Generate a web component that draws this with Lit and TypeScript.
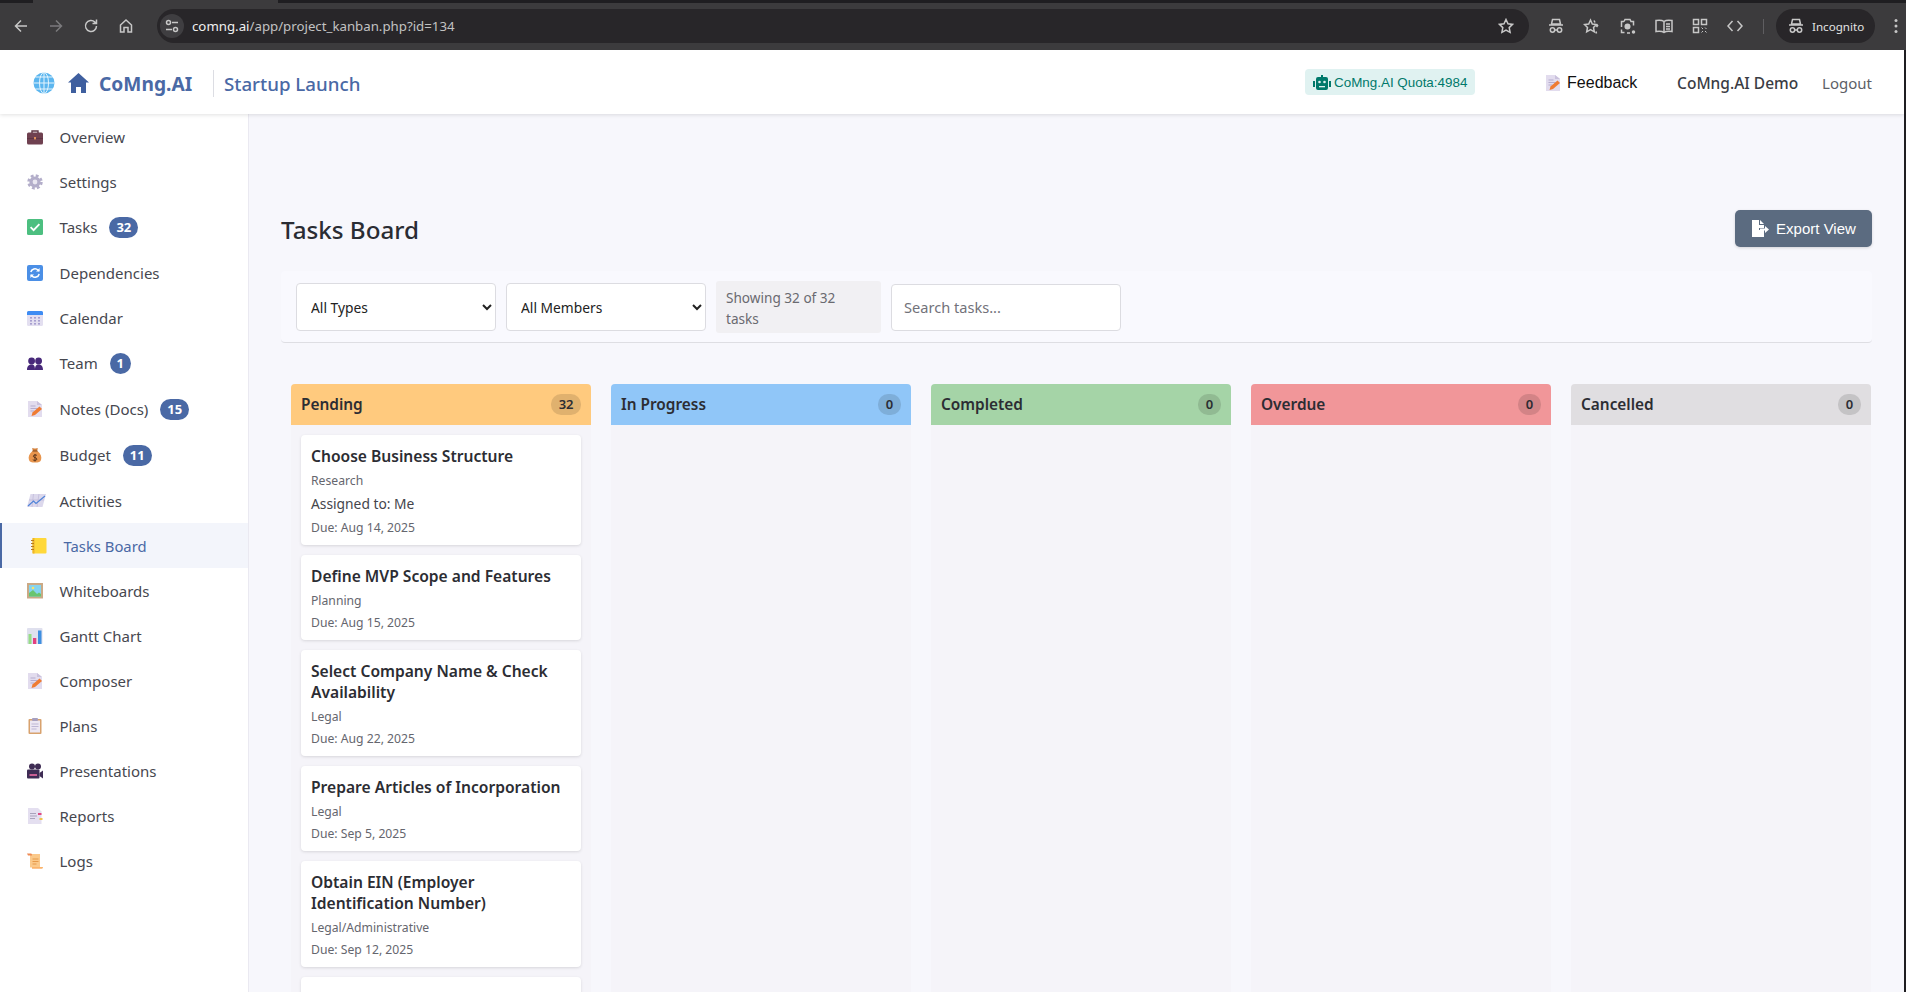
import { LitElement, html, css, svg } from 'lit';
import { customElement } from 'lit/decorators.js';

const icons: Record<string, unknown> = {
  briefcase: svg`<rect x="0" y="3.500" width="16" height="12" rx="1.500" fill="#6f4150"/><path d="M5 4V2h6v2" fill="none" stroke="#5d3644" stroke-width="1.400"/><rect x="0" y="9" width="16" height=".8" fill="#5a3341"/><rect x="7" y="8" width="2" height="2.400" fill="#e0905a"/>`,
  gear: svg`<circle cx="8" cy="8" r="6.400" fill="none" stroke="#b3aeca" stroke-width="2.600" stroke-dasharray="2.800 2.226"/><circle cx="8" cy="8" r="5.600" fill="#b3aeca"/><circle cx="8" cy="8" r="2.400" fill="#e9e7f1"/>`,
  check: svg`<rect x="0" y="0" width="16" height="16" rx="1.500" fill="#4cbf80"/><path d="M3.600 8.200l3 3 5.800-6" fill="none" stroke="#fff" stroke-width="1.800"/>`,
  refresh: svg`<rect x="0" y="0" width="16" height="16" rx="2" fill="#4b8fe6"/><path d="M3.800 7A4.300 4.300 0 0 1 11 5l1 1M12.200 9A4.300 4.300 0 0 1 5 11l-1-1" fill="none" stroke="#fff" stroke-width="1.500"/><path d="M12.600 3v3.600H9M3.400 13V9.400H7" fill="#fff"/>`,
  calendar: svg`<rect x="0" y="1" width="16" height="15" rx="1.500" fill="#e3dff0"/><path d="M0 5V2.500A1.500 1.500 0 0 1 1.500 1h13A1.500 1.500 0 0 1 16 2.500V5z" fill="#3e8cf3"/><g fill="#a79fd0"><rect x="3" y="7" width="2" height="1.600"/><rect x="7" y="7" width="2" height="1.600"/><rect x="11" y="7" width="2" height="1.600"/><rect x="3" y="10" width="2" height="1.600"/><rect x="7" y="10" width="2" height="1.600"/><rect x="11" y="10" width="2" height="1.600"/><rect x="3" y="13" width="2" height="1.600"/><rect x="7" y="13" width="2" height="1.600"/><rect x="11" y="13" width="2" height="1.600"/></g>`,
  team: svg`<g fill="#48297a"><circle cx="4.600" cy="6" r="3.400"/><circle cx="11.600" cy="6" r="3.400"/><path d="M0 15c0-4 2-5.500 4.600-5.500S8 11 8 15zM8 15c0-4 1-5.500 3.600-5.500S16 11 16 15z"/></g>`,
  memo: svg`<path d="M1 0h9l5 4v12H1z" fill="#e2dcee"/><path d="M10 0l5 4h-5z" fill="#c9c1dc"/><path d="M3.500 5h5M3.500 7.500h7M3.500 10h4" stroke="#b5acce" stroke-width="1"/><path d="M4.500 15l1-3.500 7-6 2.500 2.500-7 6z" fill="#ef7b33"/>`,
  money: svg`<path d="M5.500 4C2 7 1 10 2 13c.6 2 2.500 2.500 6 2.500s5.400-.5 6-2.500c1-3 0-6-3.500-9z" fill="#e8954d"/><path d="M5 1c1 .6 5 .6 6 0l-1 3H6z" fill="#d27f3a"/><rect x="5.500" y="3.500" width="5" height="1" fill="#7c4a22"/><path d="M10 8.500C9.500 7.800 6.300 7.500 6.300 9.200s3.600 1.100 3.600 2.900-3.400 1.400-4.100.6M8 7v7.500" fill="none" stroke="#53301a" stroke-width=".9"/>`,
  chart: svg`<path d="M3.500 1H19l-3.500 13H0z" fill="#dcd8ec"/><path d="M2 7h15M6.500 1L5 14M12 1l-2 13" stroke="#bdb7d8" stroke-width=".7"/><path d="M1 13l5.500-5 2.500 2.500L18 3" fill="none" stroke="#4f83d8" stroke-width="1.200"/>`,
  notebook: svg`<rect x="1.500" y="0" width="14" height="15.500" rx="1" fill="#ffd83a"/><path d="M1.500 0h2v15.500h-2z" fill="#eeb52b"/><path d="M0 2.500h3M0 5.500h3M0 8.500h3M0 11.500h3" stroke="#b57b24" stroke-width="1"/>`,
  picture: svg`<rect x="0" y="0" width="16" height="15.500" fill="#cba985"/><rect x="2" y="2" width="12" height="11.500" fill="#86d4ef"/><path d="M2 13.500V10l4-3 4 4 2-1.500 2 1.500v2.500z" fill="#69c56f"/><circle cx="6" cy="5" r="1.300" fill="#f8e36a"/>`,
  bars: svg`<rect x="0" y="0" width="15.500" height="16" rx="1" fill="#dfe0ee"/><rect x="1.500" y="6" width="3" height="10" fill="#96dc86"/><rect x="6" y="10" width="3.300" height="6" fill="#e4407f"/><rect x="11" y="2.500" width="3.500" height="13.500" fill="#3f8fe0"/>`,
  clipboard: svg`<rect x="1.500" y="1" width="13" height="15" rx="1" fill="#d8a26e"/><rect x="3" y="2.500" width="10" height="12" fill="#ece7f3"/><rect x="5" y="0" width="6" height="3" rx="1" fill="#a69fbf"/><path d="M4.500 6h7M4.500 8.500h7M4.500 11h5" stroke="#b9b1d2" stroke-width=".9"/>`,
  camera: svg`<g fill="#3e2c54"><circle cx="5" cy="3.500" r="3"/><circle cx="11" cy="3.500" r="3"/><rect x="0" y="6.500" width="12.500" height="9" rx="1"/><path d="M12.500 10l3.500-2.500v8L12.500 13z"/></g><rect x="2.500" y="11" width="7.500" height="2" fill="#c95f93"/>`,
  report: svg`<path d="M1 0h10l3.500 3.500V16H1z" fill="#e4dff0"/><path d="M3 5.500h6M3 8h7M3 10.500h5" stroke="#a9a3bc" stroke-width="1"/><rect x="11" y="5" width="3.500" height="2" fill="#e14a83"/><rect x="12.500" y="10" width="3" height="2" fill="#f1c24d"/>`,
  scroll: svg`<path d="M3 1h10v13.500H3z" fill="#fbc98a"/><path d="M0 .5h4c1 0 1 2 1 2H1z" fill="#ef8a53"/><path d="M5 14h11c0 1.500-1 1.800-1.500 1.800H5z" fill="#fbb46c"/><path d="M5.500 6h6M5.500 8.500h6M5.500 11h4" stroke="#e69a4b" stroke-width="1"/>`,
};

const nav = [
  { label: 'Overview', icon: 'briefcase' },
  { label: 'Settings', icon: 'gear' },
  { label: 'Tasks', icon: 'check', badge: 32 },
  { label: 'Dependencies', icon: 'refresh' },
  { label: 'Calendar', icon: 'calendar' },
  { label: 'Team', icon: 'team', badge: 1 },
  { label: 'Notes (Docs)', icon: 'memo', badge: 15 },
  { label: 'Budget', icon: 'money', badge: 11 },
  { label: 'Activities', icon: 'chart' },
  { label: 'Tasks Board', icon: 'notebook', active: true },
  { label: 'Whiteboards', icon: 'picture' },
  { label: 'Gantt Chart', icon: 'bars' },
  { label: 'Composer', icon: 'memo' },
  { label: 'Plans', icon: 'clipboard' },
  { label: 'Presentations', icon: 'camera' },
  { label: 'Reports', icon: 'report' },
  { label: 'Logs', icon: 'scroll' },
];

const columns = [
  { name: 'Pending', cls: 'pending', count: 32 },
  { name: 'In Progress', cls: 'progress', count: 0 },
  { name: 'Completed', cls: 'completed', count: 0 },
  { name: 'Overdue', cls: 'overdue', count: 0 },
  { name: 'Cancelled', cls: 'cancelled', count: 0 },
];

const tasks = [
  { title: 'Choose Business Structure', type: 'Research', who: 'Me', due: 'Aug 14, 2025' },
  { title: 'Define MVP Scope and Features', type: 'Planning', due: 'Aug 15, 2025' },
  { title: 'Select Company Name & Check Availability', type: 'Legal', due: 'Aug 22, 2025' },
  { title: 'Prepare Articles of Incorporation', type: 'Legal', due: 'Sep 5, 2025' },
  { title: 'Obtain EIN (Employer Identification Number)', type: 'Legal/Administrative', due: 'Sep 12, 2025' },
];

@customElement('browser-bar')
export class BrowserBar extends LitElement {
  static styles = css`
    :host {
      display: block;
      height: 50px;
      background: #3c3b3d;
      font-family: 'Noto Sans', sans-serif;
      color: #e3e3e3;
    }
    .strip {
      height: 3px;
      background: #1f1e21;
      display: flex;
    }
    .strip i {
      width: 245px;
      margin-left: 33px;
      background: #3c3b3d;
    }
    .row {
      display: flex;
      align-items: center;
      height: 34px;
      margin-top: 6px;
    }
    svg {
      display: block;
      fill: none;
      stroke: #c7c7c7;
      stroke-width: 1.5;
      flex: none;
    }
    svg.off {
      stroke: #7b7a7d;
    }
    .navs {
      display: flex;
      width: 157px;
      padding-left: 13px;
      box-sizing: border-box;
      gap: 19px;
    }
    .omni {
      width: 1372px;
      height: 34px;
      border-radius: 17px;
      background: #282629;
      display: flex;
      align-items: center;
      padding-left: 3px;
      box-sizing: border-box;
    }
    .tune {
      width: 24px;
      height: 24px;
      border-radius: 50%;
      background: #3f3e41;
      display: flex;
      align-items: center;
      justify-content: center;
      margin-right: 8px;
    }
    .url {
      font-size: 13.25px;
      color: #c2c2c2;
      flex: 1;
    }
    .url b {
      font-weight: 400;
      color: #f0f0f0;
    }
    .omni svg.star {
      margin-right: 15px;
    }
    .exts {
      display: flex;
      align-items: center;
      gap: 19px;
      margin-left: 19px;
    }
    .sep {
      width: 1px;
      height: 15px;
      background: #5f5e61;
      margin: 0 12px 0 20px;
    }
    .incog {
      width: 99px;
      height: 34px;
      border-radius: 17px;
      background: #282629;
      display: flex;
      align-items: center;
      font-size: 11.6px;
      padding-left: 12px;
      gap: 8px;
      box-sizing: border-box;
    }
    .kebab {
      margin-left: 19px;
    }
  `;

  render() {
    const hat = html`<svg width="16" height="16" viewBox="0 0 16 16"><path d="M4.500 1.500h7l1 4.500h-9zM1 7h14" /><circle cx="4.500" cy="12" r="2.200" /><circle cx="11.500" cy="12" r="2.200" /><path d="M6.700 12h2.600" /></svg>`;
    return html`
      <div class="strip"><i></i></div>
      <div class="row">
        <div class="navs">
          <svg width="16" height="16" viewBox="0 0 16 16"><path d="M14 8H3M8 2.500L2.500 8 8 13.500" /></svg>
          <svg class="off" width="16" height="16" viewBox="0 0 16 16"><path d="M2 8h11M8 2.500L13.500 8 8 13.500" /></svg>
          <svg width="16" height="16" viewBox="0 0 16 16"><path d="M13.500 8a5.500 5.500 0 1 1-1.600-3.900L13.500 5.500M13.500 1.500v4h-4" /></svg>
          <svg width="16" height="16" viewBox="0 0 16 16"><path d="M2.500 7L8 2l5.500 5v7H10V9.500H6V14H2.500z" /></svg>
        </div>
        <div class="omni">
          <span class="tune">
            <svg width="14" height="14" viewBox="0 0 14 14"><path d="M7 3.500h6M1 10.500h6" /><circle cx="3.500" cy="3.500" r="2" /><circle cx="10.500" cy="10.500" r="2" /></svg>
          </span>
          <span class="url"><b>comng.ai</b>/app/project_kanban.php?id=134</span>
          <svg class="star" width="16" height="16" viewBox="0 0 16 16"><path d="M8 1.500l2 4.300 4.600.6-3.400 3.200.9 4.700L8 12l-4.100 2.300.9-4.700L1.400 6.400 6 5.800z" /></svg>
        </div>
        <div class="exts">
          ${hat}
          <svg width="17" height="17" viewBox="0 0 17 17"><path d="M7.500 2l1.800 4 4.200.5-3 3 .8 4.300-3.800-2.200-3.800 2.200.8-4.300-3-3L5.700 6zM11 2.500l1 2M13 13.500l.5 2M15 7l-1.500 2" /></svg>
          <svg width="17" height="17" viewBox="0 0 17 17"><path d="M5 3.500l1-2h5l1 2h2.500v4M2.500 9V3.500H5M2.500 11.500v3h3M8 15h3" /><circle cx="8.500" cy="8.500" r="2.300" fill="#c7c7c7" /><circle cx="14.500" cy="14" r="1" fill="#c7c7c7" /></svg>
          <svg width="18" height="16" viewBox="0 0 18 16"><path d="M9 3.500C7 2 4 2 1 2.500v11c3-.5 6-.5 8 1 2-1.500 5-1.500 8-1v-11C14 2 11 2 9 3.500zM9 3.500v11M11 6h4M11 8.500h4M11 11h4" /></svg>
          <svg width="16" height="16" viewBox="0 0 16 16"><path d="M1.500 1.500h5v5h-5zM9.500 1.500h5v5h-5zM1.500 9.500h5v5h-5z" /><path d="M9.500 9.500l1.500 1.500M13 9.500l1.500 1.500M9.500 14.500l1.500-1.500M13 13l1.500 1.500" stroke-width="1" /></svg>
          <svg width="16" height="16" viewBox="0 0 16 16"><path d="M5.500 3L1 8l4.500 5M10.500 3L15 8l-4.500 5" /></svg>
        </div>
        <span class="sep"></span>
        <div class="incog">${hat}<span>Incognito</span></div>
        <svg class="kebab" width="4" height="16" viewBox="0 0 4 16"><g fill="#c7c7c7" stroke="none"><circle cx="2" cy="2.500" r="1.500" /><circle cx="2" cy="8" r="1.500" /><circle cx="2" cy="13.500" r="1.500" /></g></svg>
      </div>
    `;
  }
}

@customElement('app-root')
export class AppRoot extends LitElement {
  static styles = css`
    :host {
      display: block;
      width: 1906px;
      height: 992px;
      overflow: hidden;
      background: #1f1e21;
      font-family: 'Noto Sans', sans-serif;
      color: #2c2d33;
    }
    .page {
      width: 1904px;
      height: 942px;
      display: flex;
      flex-direction: column;
      background: #f7f7fc;
      overflow: hidden;
    }
    header {
      flex: none;
      height: 64px;
      background: #fff;
      display: flex;
      align-items: center;
      box-shadow: 0 1px 4px rgba(0, 0, 0, 0.12);
      position: relative;
      z-index: 2;
      padding: 0 32px 0 33px;
      box-sizing: border-box;
    }
    .globe {
      width: 22px;
      height: 22px;
      margin-right: 13px;
      margin-top: 2px;
    }
    .home {
      width: 21px;
      height: 20px;
      margin-right: 10px;
      margin-top: 2px;
    }
    .brand {
      font-size: 19.2px;
      font-weight: 700;
      color: #4a69a5;
      width: 114px;
      padding-top: 3px;
    }
    .project {
      border-left: 1px solid #dcdde3;
      height: 27px;
      line-height: 27px;
      margin-top: 2px;
      padding-left: 10px;
      font-size: 18.7px;
      font-weight: 500;
      color: #4a69a5;
      flex: 1;
    }
    .quota {
      width: 170px;
      height: 26px;
      border-radius: 4px;
      background: #e0f2f1;
      color: #00796b;
      font-family: 'Liberation Sans', sans-serif;
      font-size: 13.4px;
      display: flex;
      align-items: center;
      padding-left: 8px;
      gap: 3px;
      box-sizing: border-box;
      flex: none;
    }
    .quota svg {
      width: 18px;
      height: 15px;
    }
    .feedback {
      margin-left: 70px;
      display: flex;
      align-items: center;
      gap: 6px;
      font-family: 'Liberation Sans', sans-serif;
      font-size: 16px;
      color: #111;
      width: 92px;
      flex: none;
      padding-top: 1px;
    }
    .fb {
      width: 16px;
      height: 16px;
      flex: none;
    }
    .user {
      margin-left: 40px;
      font-size: 15.5px;
      font-weight: 500;
      color: #3a3c44;
      width: 145px;
      flex: none;
      padding-top: 2px;
    }
    .logout {
      font-size: 15px;
      color: #5d5f67;
      padding-top: 2px;
    }
    .body {
      flex: 1;
      display: flex;
      min-height: 0;
    }
    aside {
      flex: none;
      width: 249px;
      box-sizing: border-box;
      background: #fff;
      border-right: 1px solid #eae9f1;
    }
    .item {
      display: flex;
      align-items: center;
      line-height: 20px;
      padding: 12.5px 0 12.5px 27px;
      font-size: 15px;
      color: #46474f;
    }
    .item svg {
      width: 16px;
      height: 16px;
      flex: none;
      overflow: visible;
      margin-right: 16.5px;
    }
    .item.active {
      background: #f3f5fb;
      color: #4a69a5;
      border-left: 2px solid #4a69a5;
      padding-left: 29px;
      font-size: 14.8px;
    }
    .badge {
      margin-left: 12px;
      height: 21px;
      min-width: 21px;
      padding: 0 7px;
      box-sizing: border-box;
      border-radius: 11px;
      background: #4a69a5;
      color: #fff;
      font-size: 13px;
      font-weight: 700;
      line-height: 21px;
      text-align: center;
    }
    .badge.one {
      padding: 0;
    }
    main {
      flex: 1;
      min-width: 0;
      padding: 96px 32px 0 32px;
      display: flex;
      flex-direction: column;
    }
    .titlebar {
      display: flex;
      justify-content: space-between;
      align-items: center;
      height: 37px;
    }
    h1 {
      margin: 0;
      padding-top: 1px;
      font-size: 24.2px;
      font-weight: 500;
      color: #2a2c33;
    }
    .export {
      width: 137px;
      height: 37px;
      box-sizing: border-box;
      border: 0;
      border-radius: 5px;
      background: #5b6b80;
      color: #fff;
      font-family: 'Liberation Sans', sans-serif;
      font-size: 15px;
      display: flex;
      align-items: center;
      justify-content: center;
      gap: 7px;
      box-shadow: 0 1px 3px rgba(0, 0, 0, 0.15);
    }
    .export svg {
      width: 18px;
      height: 17px;
    }
    .toolbar {
      margin-top: 24px;
      height: 72px;
      box-sizing: border-box;
      background: #f9f9fe;
      border-bottom: 1px solid #dedee3;
      border-radius: 4px;
      display: flex;
      align-items: center;
      padding: 1px 0 0 15px;
      gap: 10px;
    }
    select {
      width: 200px;
      height: 48px;
      box-sizing: border-box;
      padding: 0 10px;
      background: #fff;
      border: 1px solid #dcdce1;
      border-radius: 4px;
      font-family: inherit;
      font-size: 13.8px;
      color: #222;
    }
    .status {
      width: 165px;
      height: 52px;
      box-sizing: border-box;
      padding: 7px 30px 0 10px;
      background: #f1f0f3;
      border-radius: 3px;
      font-size: 13.6px;
      line-height: 20.5px;
      color: #6a6a70;
    }
    input {
      width: 230px;
      height: 47px;
      box-sizing: border-box;
      padding: 0 12px;
      background: #fff;
      border: 1px solid #dcdce1;
      border-radius: 4px;
      font-family: inherit;
      font-size: 14.6px;
    }
    input::placeholder {
      color: #72727a;
    }
    .board {
      margin-top: 41px;
      margin-left: 10px;
      display: flex;
      gap: 20px;
      flex: 1;
      min-height: 0;
    }
    .col {
      flex: none;
      width: 300px;
      background: #f5f4f9;
      border-radius: 4px 4px 0 0;
      overflow: hidden;
    }
    .col-head {
      height: 41px;
      display: flex;
      align-items: center;
      justify-content: space-between;
      padding: 0 10px;
      font-size: 15.4px;
      font-weight: 600;
    }
    .pending { background: #ffca7e; }
    .progress { background: #90c6f8; }
    .completed { background: #a5d4a7; }
    .overdue { background: #f19699; }
    .cancelled { background: #e0dee1; }
    .count {
      height: 21px;
      min-width: 23px;
      padding: 0 7.5px;
      box-sizing: border-box;
      border-radius: 10px;
      background: rgba(0, 0, 0, 0.12);
      font-size: 13px;
      font-weight: 600;
      line-height: 21px;
      text-align: center;
    }
    .cards {
      padding: 10px;
      display: flex;
      flex-direction: column;
      gap: 10px;
    }
    .card {
      background: #fff;
      border-radius: 4px;
      padding: 11px 10px 9px;
      box-shadow: 0 1px 3px rgba(0, 0, 0, 0.12);
    }
    .card.blank {
      height: 80px;
    }
    .card h4 {
      margin: 0 0 5px;
      font-size: 15.6px;
      font-weight: 600;
      line-height: 21px;
    }
    .type,
    .due {
      font-size: 12.2px;
      line-height: 17px;
      color: #65666e;
    }
    .due {
      margin-top: 5px;
    }
    .who {
      margin-top: 5px;
      font-size: 13.8px;
      line-height: 20px;
      color: #44454c;
    }
  `;

  render() {
    return html`
      <browser-bar></browser-bar>
      <div class="page">
        <header>
          <svg class="globe" viewBox="0 0 22 22">
            <circle cx="11" cy="11" r="10.5" fill="#5cb6ef" />
            <g fill="none" stroke="#e4f4fd" stroke-width="1">
              <ellipse cx="11" cy="11" rx="4.5" ry="10.5" />
              <path d="M11 .5v21M.5 11h21M2.500 5h17M2.500 17h17" />
            </g>
          </svg>
          <svg class="home" viewBox="0 0 21 20">
            <path d="M10.500 0L21 9.500h-3V20h-5v-6H8v6H3V9.500H0z" fill="#3f5f9f" />
          </svg>
          <span class="brand">CoMng.AI</span>
          <span class="project">Startup Launch</span>
          <span class="quota">
            <svg viewBox="0 0 18 15"><path d="M8 0h2v2h3a2 2 0 0 1 2 2v9a2 2 0 0 1-2 2H5a2 2 0 0 1-2-2V4a2 2 0 0 1 2-2h3zM0 6h2v6H0zM16 6h2v6h-2z" fill="#00796b" /><circle cx="6.500" cy="7" r="1.300" fill="#e0f2f1" /><circle cx="11.500" cy="7" r="1.300" fill="#e0f2f1" /><rect x="6" y="11" width="6" height="1.300" fill="#e0f2f1" /></svg>
            CoMng.AI Quota:4984
          </span>
          <span class="feedback">
            <svg class="fb" viewBox="0 0 16 16">${icons.memo}</svg>
            Feedback
          </span>
          <span class="user">CoMng.AI Demo</span>
          <span class="logout">Logout</span>
        </header>
        <div class="body">
          <aside>
            ${nav.map(
              (n) => html`
                <div class="item ${n.active ? 'active' : ''}">
                  <svg viewBox="0 0 16 16">${icons[n.icon]}</svg>
                  <span>${n.label}</span>
                  ${n.badge
                    ? html`<span class="badge ${n.badge < 10 ? 'one' : ''}">${n.badge}</span>`
                    : ''}
                </div>
              `
            )}
          </aside>
          <main>
            <div class="titlebar">
              <h1>Tasks Board</h1>
              <button class="export">
                <svg viewBox="0 0 18 17"><path d="M1 0h7v5h5v3H8v2h5v7H1zM9 0l4 4H9zM9 8.500h5V6l4 3.500-4 3.500v-2.500H9z" fill="#fff" /></svg>
                Export View
              </button>
            </div>
            <div class="toolbar">
              <select><option>All Types</option></select>
              <select><option>All Members</option></select>
              <div class="status">Showing 32 of 32 tasks</div>
              <input placeholder="Search tasks..." />
            </div>
            <div class="board">
              ${columns.map(
                (c, i) => html`
                  <section class="col">
                    <div class="col-head ${c.cls}">
                      <span>${c.name}</span>
                      <span class="count">${c.count}</span>
                    </div>
                    ${i === 0
                      ? html`
                          <div class="cards">
                            ${tasks.map(
                              (t) => html`
                                <div class="card">
                                  <h4>${t.title}</h4>
                                  <div class="type">${t.type}</div>
                                  ${t.who ? html`<div class="who">Assigned to: ${t.who}</div>` : ''}
                                  <div class="due">Due: ${t.due}</div>
                                </div>
                              `
                            )}
                            <div class="card blank"></div>
                          </div>
                        `
                      : ''}
                  </section>
                `
              )}
            </div>
          </main>
        </div>
      </div>
    `;
  }
}
